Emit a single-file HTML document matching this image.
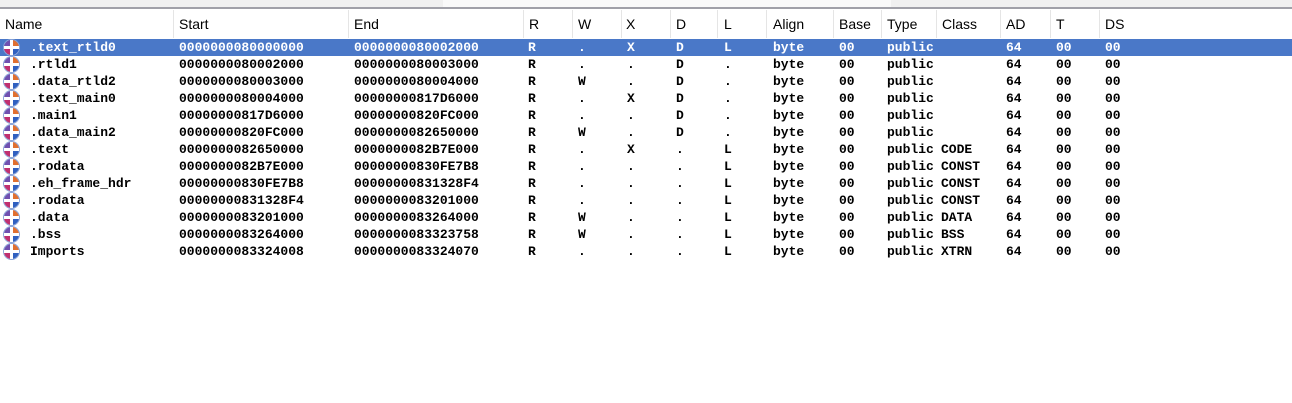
<!DOCTYPE html>
<html><head><style>
body{margin:0;width:1292px;height:403px;background:#fff;position:relative;overflow:hidden;font-family:"Liberation Sans",sans-serif}
.top{position:absolute;left:0;top:0;width:1292px;height:7px;background:#f0f0f0;border-bottom:2px solid #a0a0a8}
.tab{position:absolute;left:443px;top:0;width:448px;height:7px;background:#f9f9f9}
.hdr{position:absolute;left:0;top:10px;width:1292px;height:28px;background:#fff}
.hl{position:absolute;top:10px;height:28px;width:1px;background:#e5e5e5}
.ht{position:absolute;top:16px;font-size:14px;color:#000}
.row{position:absolute;left:0;width:1292px;height:17px}
.sel{background:#4a78c8}
.c{position:absolute;top:1px;font:bold 13px/15px "Liberation Mono",monospace;color:#000;white-space:pre}
.sel .c{color:#fff}
.ic{position:absolute;left:4px;top:1px;width:15px;height:15px;border-radius:50%;background:conic-gradient(#e07030 0 25%,#3060c0 0 50%,#c03070 0 75%,#7050b0 0);box-shadow:0 0 0 1px #8aa4d8}
.ic:after{content:"";position:absolute;left:6px;top:0;width:3px;height:15px;background:#fff}
.ic:before{content:"";position:absolute;left:0;top:6px;width:15px;height:3px;background:#fff}
</style></head><body>
<div class="top"></div><div class="tab"></div>
<div class="hdr"></div>
<div class="hl" style="left:173px"></div><div class="hl" style="left:348px"></div><div class="hl" style="left:523px"></div><div class="hl" style="left:572px"></div><div class="hl" style="left:621px"></div><div class="hl" style="left:670px"></div><div class="hl" style="left:717px"></div><div class="hl" style="left:766px"></div><div class="hl" style="left:833px"></div><div class="hl" style="left:881px"></div><div class="hl" style="left:936px"></div><div class="hl" style="left:1000px"></div><div class="hl" style="left:1050px"></div><div class="hl" style="left:1099px"></div>
<div class="ht" style="left:5px">Name</div><div class="ht" style="left:179px">Start</div><div class="ht" style="left:354px">End</div><div class="ht" style="left:529px">R</div><div class="ht" style="left:578px">W</div><div class="ht" style="left:626px">X</div><div class="ht" style="left:676px">D</div><div class="ht" style="left:724px">L</div><div class="ht" style="left:773px">Align</div><div class="ht" style="left:839px">Base</div><div class="ht" style="left:887px">Type</div><div class="ht" style="left:942px">Class</div><div class="ht" style="left:1006px">AD</div><div class="ht" style="left:1056px">T</div><div class="ht" style="left:1105px">DS</div>
<div id="rows"></div>
<script>
var d=[
[".text_rtld0","0000000080000000","0000000080002000","R",".","X","D","L",""],
[".rtld1","0000000080002000","0000000080003000","R",".",".","D",".",""],
[".data_rtld2","0000000080003000","0000000080004000","R","W",".","D",".",""],
[".text_main0","0000000080004000","00000000817D6000","R",".","X","D",".",""],
[".main1","00000000817D6000","00000000820FC000","R",".",".","D",".",""],
[".data_main2","00000000820FC000","0000000082650000","R","W",".","D",".",""],
[".text","0000000082650000","0000000082B7E000","R",".","X",".","L","CODE"],
[".rodata","0000000082B7E000","00000000830FE7B8","R",".",".",".","L","CONST"],
[".eh_frame_hdr","00000000830FE7B8","00000000831328F4","R",".",".",".","L","CONST"],
[".rodata","00000000831328F4","0000000083201000","R",".",".",".","L","CONST"],
[".data","0000000083201000","0000000083264000","R","W",".",".","L","DATA"],
[".bss","0000000083264000","0000000083323758","R","W",".",".","L","BSS"],
["Imports","0000000083324008","0000000083324070","R",".",".",".","L","XTRN"]];
var x=[30,179,354,528,578,627,676,724,941],h="";
d.forEach(function(r,i){h+='<div class="row'+(i==0?' sel':'')+'" style="top:'+(39+i*17)+'px"><div class="ic"></div>';
r.forEach(function(v,j){h+='<div class="c" style="left:'+x[j]+'px">'+v+'</div>'});
h+='<div class="c" style="left:773px">byte</div><div class="c" style="left:839px">00</div><div class="c" style="left:887px">public</div><div class="c" style="left:1006px">64</div><div class="c" style="left:1056px">00</div><div class="c" style="left:1105px">00</div></div>'});
document.getElementById('rows').innerHTML=h;
</script>
</body></html>
